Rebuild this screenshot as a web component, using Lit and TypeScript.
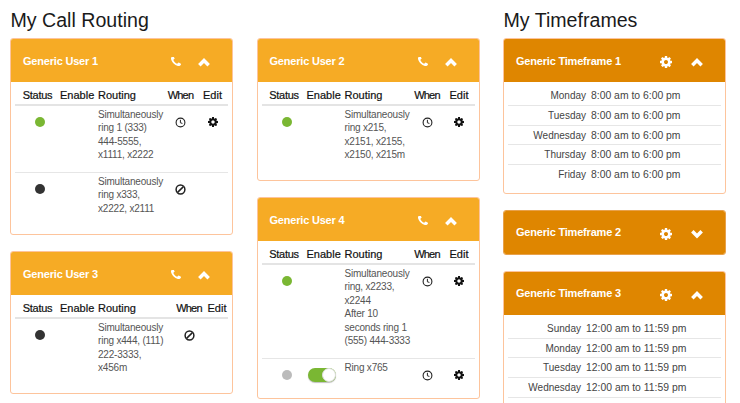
import { LitElement, html, css, svg } from "lit";
import { customElement } from "lit/decorators.js";

const PHONE = "M1600 1240q0 27-10 70.5t-21 68.5q-21 50-122 106-94 51-186 51-27 0-53-3.5t-57.5-12.5-47-14.5-55.5-20.5-49-18q-98-35-175-83-127-79-264-216t-216-264q-48-77-83-175-3-9-18-49t-20.5-55.5-14.5-47-12.5-57.5-3.5-53q0-92 51-186 56-101 106-122 25-11 68.5-21t70.5-10q14 0 21 3 18 6 53 76 11 19 30 54t35 63.5 31 53.5q3 4 17.5 25t21.5 35.5 7 28.5q0 20-28.5 50t-62 55-62 53-28.5 46q0 9 5 22.5t8.5 20.5 14 24 11.5 19q76 137 174 235t235 174q2 1 19 11.5t24 14 20.5 8.5 22.5 5q18 0 46-28.5t53-62 55-62 50-28.5q14 0 28.5 7t35.5 21.5 25 17.5q25 15 53.5 31t63.5 35 54 30q70 35 76 53 3 7 3 21z";
const GEAR = "M1152 896q0-106-75-181t-181-75-181 75-75 181 75 181 181 75 181-75 75-181zm512-109v222q0 12-8 23t-20 13l-185 28q-19 54-39 91 35 50 107 138 10 12 10 25t-9 23q-27 37-99 108t-94 71q-12 0-26-9l-138-108q-44 23-91 38-16 136-29 186-7 28-36 28h-222q-14 0-24.5-8.5t-11.5-21.5l-28-184q-49-16-90-37l-141 107q-10 9-25 9-14 0-25-11-126-114-165-168-7-10-7-23 0-12 8-23 15-21 51-66.5t54-70.5q-27-50-41-99l-183-27q-13-2-21-12.5t-8-23.5v-222q0-12 8-23t19-13l186-28q14-46 39-92-40-57-107-138-10-12-10-24 0-10 9-23 26-36 98.5-107.5t94.5-71.5q13 0 26 10l138 107q44-23 91-38 16-136 29-186 7-28 36-28h222q14 0 24.5 8.5t11.5 21.5l28 184q49 16 90 37l142-107q9-9 24-9 13 0 25 10 129 119 165 170 7 8 7 22 0 12-8 23-15 21-51 66.5t-54 70.5q26 50 41 98l183 28q13 2 21 12.5t8 23.5z";

const phoneIcon = html`<svg class="ic phone" viewBox="192 256 1408 1408"><path d=${PHONE} fill="#fff"></path></svg>`;
const gearIcon = (cls: string) => html`<svg class=${cls} viewBox="128 128 1536 1536"><path d=${GEAR}></path></svg>`;
const chev = (up: boolean) => html`<svg class="ic chev" viewBox="0 0 12 9">
  ${up ? svg`<polyline points="2,7 6,3 10,7"></polyline>` : svg`<polyline points="2,2 6,6 10,2"></polyline>`}
</svg>`;
const clockIcon = html`<svg class="tool" viewBox="0 0 11 11"><circle cx="5.5" cy="5.5" r="4.4" fill="none" stroke="#222" stroke-width="1.1"></circle><polyline points="5.4,2.8 5.4,5.8 7.4,6.4" fill="none" stroke="#222" stroke-width="1"></polyline></svg>`;
const banIcon = html`<svg class="tool" viewBox="0 0 11 11"><circle cx="5.5" cy="5.5" r="4.4" fill="none" stroke="#222" stroke-width="1.5"></circle><line x1="2.6" y1="8.4" x2="8.4" y2="2.6" stroke="#222" stroke-width="1.5"></line></svg>`;

type Row = { status: string; lines: string[]; when: "clock" | "ban"; edit?: boolean; toggle?: boolean; h: number };
type User = { name: string; wide?: boolean; rows: Row[] };
type Frame = { name: string; open: boolean; tw?: boolean; rows: [string, string][] };

const U1: User = { name: "Generic User 1", rows: [
  { status: "on", lines: ["Simultaneously", "ring 1 (333)", "444-5555,", "x1111, x2222"], when: "clock", edit: true, h: 67 },
  { status: "off", lines: ["Simultaneously", "ring x333,", "x2222, x2111"], when: "ban", h: 61 },
] };
const U3: User = { name: "Generic User 3", wide: true, rows: [
  { status: "off", lines: ["Simultaneously", "ring x444, (111)", "222-3333,", "x456m"], when: "ban", h: 74 },
] };
const U2: User = { name: "Generic User 2", rows: [
  { status: "on", lines: ["Simultaneously", "ring x215,", "x2151, x2155,", "x2150, x215m"], when: "clock", edit: true, h: 74 },
] };
const U4: User = { name: "Generic User 4", rows: [
  { status: "on", lines: ["Simultaneously", "ring, x2233,", "x2244", "After 10", "seconds ring 1", "(555) 444-3333"], when: "clock", edit: true, h: 94 },
  { status: "idle", lines: ["Ring x765"], when: "clock", edit: true, toggle: true, h: 39 },
] };

const hours = "8:00 am to 6:00 pm";
const allDay = "12:00 am to 11:59 pm";
const F1: Frame = { name: "Generic Timeframe 1", open: true, rows: [["Monday", hours], ["Tuesday", hours], ["Wednesday", hours], ["Thursday", hours], ["Friday", hours]] };
const F2: Frame = { name: "Generic Timeframe 2", open: false, rows: [] };
const F3: Frame = { name: "Generic Timeframe 3", open: true, tw: true, rows: [["Sunday", allDay], ["Monday", allDay], ["Tuesday", allDay], ["Wednesday", allDay], ["Thursday", allDay]] };

@customElement("app-root")
export class AppRoot extends LitElement {
  static styles = css`
    :host { display: block; width: 740px; height: 403px; overflow: hidden; background: #fff; font-family: "Liberation Sans", Arial, sans-serif; color: #111; }
    .page { display: flex; gap: 23.5px; padding-left: 10px; }
    .col { width: 223px; display: flex; flex-direction: column; gap: 16px; flex: none; }
    .push { padding-top: 38px; }
    h1 { margin: 0 0 -16px; height: 38px; padding-left: 0.5px; font-size: 19.6px; font-weight: 400; line-height: 40px; color: #1a1a1a; }
    .card { flex: none; border: 1px solid #fdc49c; border-radius: 3px; background: #fff; overflow: hidden; }
    .head { height: 43px; display: flex; align-items: center; padding: 0 21px 0 12px; color: #fff; font-size: 11px; letter-spacing: -0.2px; font-weight: 700; background: #f6ab25; }
    .frame .head { background: #df8600; }
    .frame.closed { border-color: #e8a14a; }
    .title { flex: 1; white-space: nowrap; }
    .ic { display: block; flex: none; margin-top: 3px; }
    .phone { width: 10px; height: 10px; margin-right: 16px; margin-top: 3px; }
    .chev { width: 14px; height: 10.5px; fill: none; stroke: #fff; stroke-width: 3; }
    .hgear { width: 12px; height: 12px; margin-right: 18px; fill: #fff; }
    .body { padding: 0 4px; }
    .grid { display: grid; grid-template-columns: 45px 34px 70px 33px 31px; }
    .wide .grid { grid-template-columns: 45px 34px 78px 34px 22px; }
    .thead { height: 24px; padding-top: 4px; box-sizing: border-box; border-bottom: 2px solid #e4e4e4; align-items: center; font-size: 11px; color: #111; text-align: center; -webkit-text-stroke: 0.2px #111; }
    .thead .r { text-align: left; padding-left: 4px; }
    .thead .st { letter-spacing: -0.3px; }
    .thead .wh { letter-spacing: -0.8px; }
    .row { box-sizing: border-box; border-bottom: 1px solid #e6e6e6; }
    .row:last-child { border-bottom: 0; }
    .cell { display: flex; justify-content: center; padding-top: 11px; }
    .row.sw .cell.en { padding-top: 9px; padding-right: 4px; }
    .route { padding: 2px 0 0 4px; font-size: 10px; letter-spacing: -0.2px; line-height: 13.4px; color: #555; white-space: nowrap; }
    .dot { width: 10px; height: 10px; border-radius: 50%; margin-left: 5px; }
    .on { background: #7ab733; }
    .off { background: #333; }
    .idle { background: #bbb; }
    .tool { width: 11px; height: 11px; display: block; }
    .egear { width: 10px; height: 10px; fill: #111; display: block; }
    .toggle { width: 28px; height: 14px; position: relative; border-radius: 7px; background: #7ab733; box-shadow: 0 1px 1px rgba(0,0,0,.25); }
    .knob { position: absolute; right: 0; top: 0; width: 12px; height: 12px; border: 1px solid #ddd; border-radius: 50%; background: #fff; }
    .times { padding: 0 4px 8px; font-size: 10.4px; color: #444; }
    .t { display: grid; grid-template-columns: 78px auto; column-gap: 5px; height: 19.7px; box-sizing: border-box; border-bottom: 1px solid #e6e6e6; line-height: 19px; white-space: nowrap; }
    .t:first-child { height: 24px; line-height: 27px; }
    .t:last-child { border-bottom: 0; }
    .tw .t { grid-template-columns: 73px auto; }
    .day { text-align: right; font-size: 10px; }
  `;

  private user(u: User) {
    return html`<section class="card ${u.wide ? "wide" : ""}">
      <div class="head"><span class="title">${u.name}</span>${phoneIcon}${chev(true)}</div>
      <div class="body">
        <div class="grid thead"><span class="st">Status</span><span>Enable</span><span class="r">Routing</span><span class="wh">When</span><span>Edit</span></div>
        ${u.rows.map((r) => html`<div class="grid row ${r.toggle ? "sw" : ""}" style="min-height:${r.h}px">
          <div class="cell"><span class="dot ${r.status}"></span></div>
          <div class="cell en">${r.toggle ? html`<span class="toggle"><span class="knob"></span></span>` : ""}</div>
          <div class="route">${r.lines.map((l) => html`<div>${l}</div>`)}</div>
          <div class="cell">${r.when === "clock" ? clockIcon : banIcon}</div>
          <div class="cell">${r.edit ? gearIcon("egear") : ""}</div>
        </div>`)}
      </div>
    </section>`;
  }

  private frame(f: Frame) {
    return html`<section class="card frame ${f.open ? "" : "closed"} ${f.tw ? "tw" : ""}">
      <div class="head"><span class="title">${f.name}</span>${gearIcon("ic hgear")}${chev(f.open)}</div>
      ${f.open ? html`<div class="times">${f.rows.map(([d, h]) => html`<div class="t"><span class="day">${d}</span><span>${h}</span></div>`)}</div>` : ""}
    </section>`;
  }

  render() {
    return html`<main class="page">
      <div class="col"><h1>My Call Routing</h1>${this.user(U1)}${this.user(U3)}</div>
      <div class="col push">${this.user(U2)}${this.user(U4)}</div>
      <div class="col"><h1>My Timeframes</h1>${this.frame(F1)}${this.frame(F2)}${this.frame(F3)}</div>
    </main>`;
  }
}
